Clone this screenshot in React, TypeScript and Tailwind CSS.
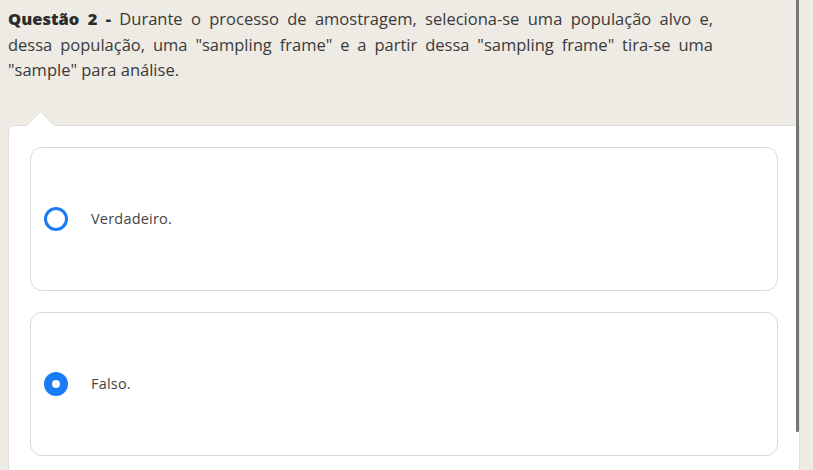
export default function App() {
  const font = { fontFamily: '"Open Sans", "Noto Sans", sans-serif' };
  return (
    <div className="w-[813px] h-[470px] bg-[#eeeae4] flex overflow-hidden" style={font}>
      <div className="w-[800px] relative shrink-0">
        <div className="pl-2 pt-[6px] w-[713px] text-[16.5px] leading-[25.5px] text-[#3a3a3a]">
          <div className="text-justify [text-align-last:justify]">
            <span className="font-extrabold text-[#2b2b2b]">Questão 2 -</span> Durante o processo de amostragem, seleciona-se uma população alvo e,
          </div>
          <div className="text-justify [text-align-last:justify]">
            dessa população, uma "sampling frame" e a partir dessa "sampling frame" tira-se uma
          </div>
          <div>"sample" para análise.</div>
        </div>
        <div className="relative ml-2 mt-[42px] w-[792px] bg-white border border-[#e2dfda] rounded-tl-md px-[21px] pt-[21px] h-[400px]">
          <div className="absolute left-[21px] -top-[11px] w-[21px] h-[21px] bg-white rotate-45 border-l border-t border-[#e2dfda]" />
          <div className="relative flex flex-col gap-[21px]">
            <div className="h-[144px] rounded-[12px] border border-[#dadada] flex items-center pl-[13px]">
              <div className="w-6 h-6 rounded-full border-[3px] border-[#1a7cf5] shrink-0" />
              <span className="ml-[23px] text-[14.5px] tracking-[0.2px] text-[#444]">Verdadeiro.</span>
            </div>
            <div className="h-[144px] rounded-[12px] border border-[#dadada] flex items-center pl-[13px]">
              <div className="w-6 h-6 rounded-full border-[8px] border-[#1a7cf5] bg-white shrink-0" />
              <span className="ml-[23px] text-[14.5px] tracking-[0.2px] text-[#444]">Falso.</span>
            </div>
          </div>
        </div>
        <div className="absolute top-0 right-[1px] w-[3px] h-[432px] bg-[#767676] rounded-b-[1px]" />
      </div>
    </div>
  );
}
